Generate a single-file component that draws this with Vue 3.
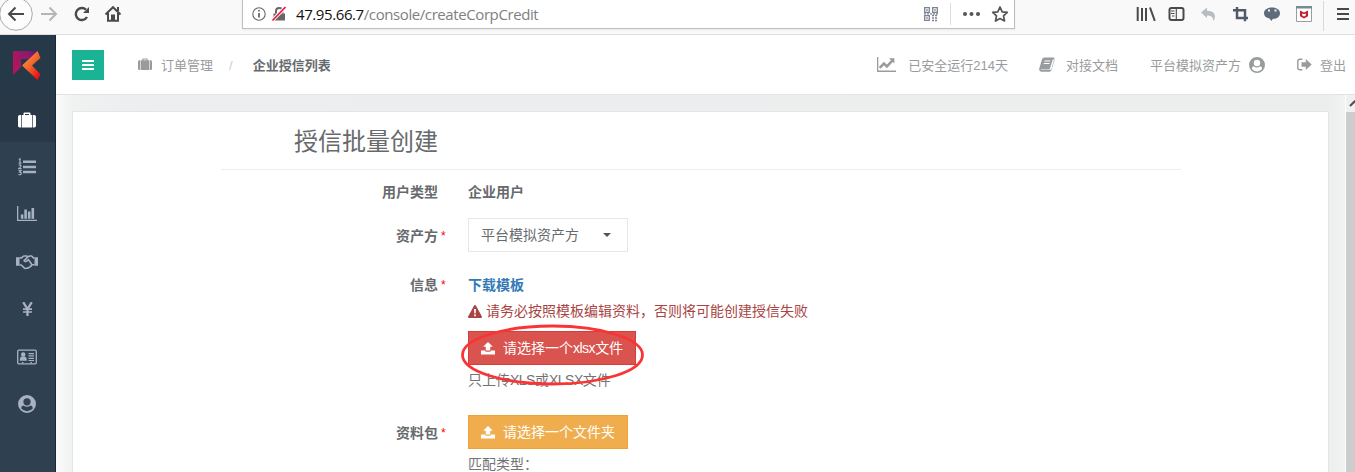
<script setup>
const menu = [
  { icon: 'suitcase', w: 18, h: 16, active: true },
  { icon: 'list', w: 18, h: 18 },
  { icon: 'bars', w: 20, h: 16 },
  { icon: 'handshake', w: 22, h: 16 },
  { icon: 'yen', w: 11, h: 14 },
  { icon: 'idcard', w: 20, h: 16 },
  { icon: 'user', w: 18, h: 18 },
]
</script>

<template>
  <svg class="sprite" aria-hidden="true">
    <symbol id="suitcase" viewBox="0 0 18 16">
      <path fill-rule="evenodd" d="M5.500 3V1.600Q5.500.5 6.600.5H11.400Q12.500.5 12.500 1.600V3H14.300V15.500H3.700V3zM7 3H11V2H7z" />
      <path d="M3 3V15.500H1.800Q0 15.500 0 13.700V4.800Q0 3 1.800 3z" />
      <path d="M15 3H16.200Q18 3 18 4.800V13.700Q18 15.500 16.200 15.500H15z" />
    </symbol>
    <symbol id="list" viewBox="0 0 18 18">
      <path d="M5 2.500h13v2.600H5zM5 7.700h13v2.600H5zM5 12.700h13v2.600H5z" />
      <path fill="none" stroke="currentColor" stroke-width="1.200" d="M.8 1.500 2 .8V5M.6 5.100h2.900M.7 7.400q1.600-1.200 2.200 0T.8 10.600h2.800M.6 12.600h2.500l-1.400 1.600q1.600 0 1.500 1.400-.3 1.700-2.800.9" />
    </symbol>
    <symbol id="bars" viewBox="0 0 20 16">
      <path d="M0 0h1.300v13.700H20V15H0zM3.800 8.500h2.600v4.200H3.800zM7.300 3.500h2.600v9.200H7.300zM10.900 5.500h2.600v7.200h-2.600zM14.500 2h2.600v10.700h-2.600z" />
    </symbol>
    <symbol id="handshake" viewBox="0 0 22 16">
      <path d="M0 3.200h3.500v8.600H0zM18.500 3.200H22v8.600h-3.500z" />
      <path fill="none" stroke="currentColor" stroke-width="1.600" stroke-linejoin="round" d="M3.500 3.900h2L7.700 2h3l1.200.8L14 2h1.600l1.900 1.900h1M3.500 11h1.800l3.200 3.100q1 .8 2 .1 1.200.4 1.900-.7 1.400.2 1.800-1.100 1.500-.1 1.300-1.600l3-.1M11.900 2.800 8 6.500q.9 1.700 2.600.5L12.400 5.600l3.300 4.700" />
    </symbol>
    <symbol id="yen" viewBox="0 0 11 14">
      <path fill="none" stroke="currentColor" stroke-width="2.300" d="M1.200.2 5.500 7 9.800.2M5.500 7v7" />
      <path d="M1 6.300h9v1.600H1zM1 9.200h9v1.600H1z" />
    </symbol>
    <symbol id="idcard" viewBox="0 0 20 16">
      <rect x=".7" y="1.200" width="18.600" height="13.600" rx="1.200" fill="none" stroke="currentColor" stroke-width="1.300" />
      <circle cx="6.200" cy="5.500" r="2.200" />
      <path d="M2.800 11.800Q2.800 7.500 5 7.500h2.400q2.400 0 2.400 4.300zM11.500 4H17v1.300h-5.500zM11.500 6.300H17v1.300h-5.500zM11.500 8.700H17V10h-5.500zM11.500 11H17v1h-5.500zM5 13h1.400v1.500H5zM13.500 13h1.400v1.500h-1.400z" />
    </symbol>
    <symbol id="user" viewBox="0 0 18 18">
      <path fill-rule="evenodd" d="M9 0a9 9 0 1 1 0 18A9 9 0 0 1 9 0zM9 3.200a3.600 3.600 0 1 0 0 7.200 3.600 3.600 0 0 0 0-7.200zM3.100 13.300Q3.500 10.400 5.400 10.400 9 13.200 12.600 10.400 14.500 10.400 14.900 13.300A7.400 7.400 0 0 1 3.100 13.300z" />
    </symbol>
    <symbol id="chart" viewBox="0 0 19 15">
      <path d="M0 0h1.300v13.500H19V15H0z" />
      <path fill="none" stroke="currentColor" stroke-width="2.600" d="m2.700 10.800 4.200-4.300 3 2.900 5.500-5.700" />
      <path d="M12 1.200H17.400v5.400z" />
    </symbol>
    <symbol id="book" viewBox="0 0 16 15">
      <path fill-rule="evenodd" d="M5.300.5h9.200q1.300.1.900 1.500l-3 10q-.4 1.100-1.500 1.100H2.500q-.9 0-.7-.5h8.800L13.900 2.300l1.700.7-3.200 10.300Q12 14.700 10.500 14.700H2.200Q-.2 14.200.2 11.800L3 2.200Q3.600.6 5.300.5zM5.600 3.400l-.3 1h5.900l.3-1zM4.900 5.900l-.3 1h5.900l.3-1z" />
    </symbol>
    <symbol id="signout" viewBox="0 0 15 13">
      <path fill="none" stroke="currentColor" stroke-width="1.400" d="M5.400 1.200H3Q.8 1.200.8 3.200v6.500q0 2 2.200 2h2.400" />
      <path d="M4.500 4.200H8.800V1l5.900 5.500-5.900 5.500v-3.200H4.500z" />
    </symbol>
    <symbol id="warning" viewBox="0 0 14 13">
      <path fill-rule="evenodd" d="M6.100.6Q7-.5 7.900.6l6 10.900Q14.300 13 13 13H1Q-.3 13 .1 11.500zM6 4l.3 4.500h1.400L8 4zM6.100 9.500v1.700h1.800V9.500z" />
    </symbol>
    <symbol id="upload" viewBox="0 0 14 13">
      <path d="M7 0 11.800 4.800H9.200V8.500H4.800V4.800H2.200z" />
      <path d="M0 8.500H4Q4.200 9.700 5.300 9.700H8.700Q9.800 9.700 10 8.500H14V12.500H0z" />
    </symbol>
  </svg>

  <div class="window">
    <div class="chrome">
      <svg class="nav" viewBox="0 0 130 34">
        <circle cx="16" cy="14" r="16.300" fill="#fdfdfd" stroke="#aaa" stroke-width="1" />
        <g fill="none" stroke="#4a4a4c" stroke-width="2">
          <path d="M24 14H9.500M15.500 7.500 9 14l6.500 6.500" />
          <path stroke="#b5b5b6" d="M41 14h14.500M49.500 7.500 56 14l-6.500 6.500" />
          <path d="M86 9.700A6 6 0 1 0 87 17" stroke-width="2.400" />
          <path d="m105.500 14.500 7.500-7.300 7.500 7.300M108 13v7.700h10V13" />
        </g>
        <path d="M89 7v6h-6zM111 14.500h4V21h-4zM117 7h2v4h-2z" fill="#4a4a4c" />
      </svg>
      <div class="address">
        <svg class="site" viewBox="0 0 38 20">
          <circle cx="7" cy="10" r="6.200" fill="none" stroke="#666" stroke-width="1.100" />
          <path d="M6.200 6h1.600v1.600H6.200zM6.200 9h1.600v4.500H6.200z" fill="#555" />
          <path d="M21.500 9.500h11.500v7H21.500z" fill="#666" />
          <path d="M24 9.500V7q0-3 3.200-3t3.200 3v2.500" fill="none" stroke="#666" stroke-width="2" />
          <path d="M33 3.500 20.800 16" stroke="#fff" stroke-width="3.500" />
          <path d="M33.500 3 20.500 16.500" stroke="#f0164a" stroke-width="1.800" />
        </svg>
        <span class="url"><b>47.95.66.7</b>/console/createCorpCredit</span>
        <svg class="actions" viewBox="0 0 96 28">
          <g fill="none" stroke="#7b8390" stroke-width="1.300">
            <path d="M5.700 7.700h4.600v4.600H5.700zM13.700 7.700h4.600v4.600h-4.600zM5.700 15.700h4.600v4.600H5.700z" />
            <path stroke-dasharray="2 1" d="M13 15.500h6M13 18h6M13 20.500h6M5 13.900h14" />
          </g>
          <path fill="#7b8390" d="M7.200 9.200h1.600v1.600H7.200zM15.200 9.200h1.600v1.600h-1.600zM7.200 17.200h1.600v1.600H7.200z" />
          <path d="M31.500 3v22" stroke="#dedede" />
          <g fill="#555"><circle cx="46" cy="14" r="2" /><circle cx="52.500" cy="14" r="2" /><circle cx="59" cy="14" r="2" /></g>
          <path d="m81 7 2.200 4.800 5.100.6-3.800 3.500 1 5.100-4.500-2.500-4.500 2.500 1-5.100-3.800-3.500 5.100-.6z" fill="none" stroke="#555" stroke-width="1.700" stroke-linejoin="round" />
        </svg>
      </div>
      <svg class="tools" viewBox="0 0 225 34">
        <path d="M7.700 7v14M12 8v13M16 8v13M20 7.500l4.800 13.300" fill="none" stroke="#4a4a4c" stroke-width="2" />
        <rect x="39.500" y="8" width="14" height="12" rx="2" fill="none" stroke="#4a4a4c" stroke-width="2" />
        <path d="M46.300 8v12M41 11h3.500M41 13.500h3.500M42 16h2.500" fill="none" stroke="#4a4a4c" stroke-width="1.100" />
        <path d="m71 12.500 6-5v3.200q8 0 8 6 0 2.300-1.800 4.300.4-5.500-6.200-5.500V18z" fill="#b9bdc1" />
        <path d="M103 10.300h12v11M107 7v11h11" fill="none" stroke="#4f5b68" stroke-width="2.500" />
        <path d="M142 7.500c5 0 8 2.500 8 5.700s-3 5.600-6.500 5.600q-1 0-2 2.200l-2-2.500c-3.500-.6-5.500-2.500-5.500-5.300 0-3.200 3-5.700 8-5.700z" fill="#5e6c7a" />
        <path d="M138 9.500h2v2h-2zM144.500 9.500h2v2h-2z" fill="#eef0f2" />
        <path d="M166.500 6.500h15v15h-15z" fill="#fff" stroke="#9c9c9c" />
        <path d="M166 6h16v2.500h-16z" fill="#6f8d93" />
        <path d="m170 10.500 4 2 4-2v5.700l-4 2.300-4-2.300z" fill="#c5202a" />
        <path d="m172.200 13.200 1.800 1 1.800-1v2.200l-1.800 1-1.800-1z" fill="#fff" />
        <path d="M193.500 1v30" stroke="#d9d9d9" />
        <path d="M207 9h12M207 14h12M207 19h12" stroke="#48484a" stroke-width="2" />
      </svg>
    </div>

    <div class="app">
      <aside class="sidebar">
        <div class="logo">
          <svg viewBox="0 0 28 29">
            <defs>
              <linearGradient id="lg1" x1="0" x2="1" y1=".5" y2="0">
                <stop offset="0" stop-color="#b5145c" /><stop offset=".6" stop-color="#8e1a6c" /><stop offset="1" stop-color="#5a1583" />
              </linearGradient>
              <linearGradient id="lg2" x1="0" x2=".8" y1="0" y2="1">
                <stop offset="0" stop-color="#f8a24b" /><stop offset=".5" stop-color="#f36b2d" /><stop offset="1" stop-color="#e80c13" />
              </linearGradient>
            </defs>
            <path d="M0 0h25L16 8H8v8L0 24z" fill="url(#lg1)" />
            <path d="M24.500 0 27.500 7 19 14.500l8.500 9L24.500 29 9 14.500z" fill="url(#lg2)" />
          </svg>
        </div>
        <a v-for="m in menu" :key="m.icon" class="item" :class="{ active: m.active }">
          <svg :width="m.w" :height="m.h"><use :href="'#' + m.icon" /></svg>
        </a>
      </aside>

      <div class="main">
        <header class="topbar">
          <button class="toggle"><i></i><i></i><i></i></button>
          <svg class="crumb-icon" width="14" height="12.500"><use href="#suitcase" /></svg>
          <span class="crumb">订单管理</span>
          <span class="slash">/</span>
          <strong>企业授信列表</strong>
          <div class="links">
            <svg width="19" height="15"><use href="#chart" /></svg><span class="l1">已安全运行214天</span>
            <svg width="16" height="15"><use href="#book" /></svg><span class="l2">对接文档</span>
            <span class="l3">平台模拟资产方</span><svg width="16" height="16"><use href="#user" /></svg>
            <svg class="out" width="15" height="13"><use href="#signout" /></svg><span>登出</span>
          </div>
        </header>
        <div class="content">
          <section class="card">
            <div class="form">
              <h1>授信批量创建</h1>
              <div class="row type">
                <label>用户类型</label><em></em>
                <b>企业用户</b>
              </div>
              <div class="row owner">
                <label>资产方</label><em>*</em>
                <div class="select">平台模拟资产方<i></i></div>
              </div>
              <div class="row info">
                <label>信息</label><em>*</em>
                <div>
                  <a class="download">下载模板</a>
                  <p class="warn"><svg width="14" height="13"><use href="#warning" /></svg>请务必按照模板编辑资料，否则将可能创建授信失败</p>
                  <button class="btn red"><svg width="14" height="13"><use href="#upload" /></svg><span>请选择一个<span class="latin">xlsx</span>文件</span></button>
                  <p class="hint">只上传<span class="latin">XLS</span>或<span class="latin">XLSX</span>文件</p>
                  <svg class="ring" viewBox="0 0 184 62"><ellipse cx="92.500" cy="31" rx="90" ry="29" fill="none" stroke="#fa3434" stroke-width="2.800" /></svg>
                </div>
              </div>
              <div class="row pack">
                <label>资料包</label><em>*</em>
                <div>
                  <button class="btn orange"><svg width="14" height="13"><use href="#upload" /></svg>请选择一个文件夹</button>
                  <p class="hint">匹配类型：</p>
                </div>
              </div>
            </div>
          </section>
          <div class="scrollbar"><svg viewBox="0 0 10 17"><path d="m4 11 4.500-4.500L13 11" fill="none" stroke="#505050" stroke-width="2" /></svg><i></i></div>
        </div>
      </div>
    </div>
  </div>
</template>

<style>
body { overflow: hidden; }
</style>

<style scoped>
* { box-sizing: border-box; }
.sprite { display: none; }
svg { display: block; flex: none; fill: currentColor; }
.window { width: 1355px; height: 472px; overflow: hidden; display: flex; flex-direction: column; font: 14px/20px "Liberation Sans", "Noto Sans CJK SC", sans-serif; color: #676a6c; background: #fff; }
.chrome { flex: none; height: 35px; display: flex; background: #f9f9fa; border-bottom: 1px solid #dedede; }
.nav { width: 130px; height: 34px; }
.address { width: 773px; height: 29px; margin-left: 112px; display: flex; align-items: center; background: #fff; border: solid #bebebe; border-width: 0 1px 1px; box-shadow: 0 1px 2px #0001; }
.site { width: 38px; height: 20px; margin-left: 9px; }
.url { margin-left: 6px; flex: 1; font-family: "Open Sans", sans-serif; font-size: 15px; color: #808080; white-space: nowrap; letter-spacing: -.41px; }
.url b { font-weight: 400; color: #111; }
.actions { width: 96px; height: 28px; margin-right: -1px; }
.tools { width: 225px; height: 34px; margin-left: 115px; }
.app { flex: 1; display: flex; min-height: 0; }
.sidebar { width: 56px; flex: none; background: #2f4050; border-right: 1px solid #1c2833; color: #a7b1c2; }
.logo { height: 60px; padding: 16px 0 0 13px; background: #263949; }
.logo svg { width: 28px; height: 29px; }
.item { height: 47.400px; display: flex; align-items: center; justify-content: center; padding: 2px 1px 0 0; }
.item.active { background: #293846; color: #fff; }
.main { flex: 1; display: flex; flex-direction: column; min-width: 0; }
.topbar { flex: none; height: 60px; padding-left: 16px; display: flex; align-items: center; background: #fff; border-bottom: 1px solid #e2e3e4; font-size: 13px; color: #999c9e; white-space: nowrap; }
.topbar span, .topbar strong { padding-top: 2px; }
.toggle { width: 32px; height: 30px; border: 0; padding: 0 10px; margin: 0; background: #1ab394; display: flex; flex-direction: column; justify-content: center; gap: 2px; }
.toggle i { height: 2px; background: #fff; }
.crumb-icon { margin-left: 34px; }
.crumb { margin-left: 9px; }
.slash { margin: 0 20px 0 16px; color: #ccc; }
.topbar strong { color: #676a6c; }
.links { flex: 1; display: flex; align-items: center; justify-content: flex-end; padding-right: 9px; }
.l1 { margin: 0 31px 0 12px; }
.l2 { margin: 0 32px 0 11px; }
.l3 { margin-right: 8px; }
.out { margin: 0 8px 0 32px; }
.content { flex: 1; min-height: 0; display: flex; padding: 16px 0 0 16px; background: linear-gradient(90deg, #fbfbfb, #f0f2f2 16px, #eceeef 80px, #eceeee 1270px, #f3f4f4); }
.card { width: 1257px; height: 400px; border: 1px solid #e3e6e7; background: #fff; }
.scrollbar { width: 10px; height: 377px; margin: -16px 0 0 auto; background: #f0f0f0; border-left: 1px solid #fff; }
.scrollbar svg { width: 10px; height: 17px; }
.scrollbar i { display: block; height: 360px; background: #cdcdcd; }
.form { width: 960px; margin-left: 148px; }
h1 { height: 58px; margin: 0; padding-left: 73px; border-bottom: 1px solid #eee; font-size: 24px; font-weight: 400; line-height: 59px; }
.row { display: grid; grid-template-columns: 217px 30px 1fr; }
label { text-align: right; font-weight: 700; }
em { font-style: normal; font-size: 12px; color: #f00; padding-left: 3px; }
.type { padding-top: 12px; height: 48px; }
.owner { height: 54px; }
.owner label, .owner em { padding-top: 8px; }
.select { width: 160px; height: 34px; padding-left: 12px; display: flex; align-items: center; gap: 24px; border: 1px solid #e5e6e7; }
.select i { border: 4px solid transparent; border-top-color: #555; border-bottom: 0; }
.info { height: 143px; padding-top: 3px; }
.info > div { position: relative; }
.download { display: block; font-weight: 700; color: #337ab7; }
p { margin: 0; }
.warn { display: flex; align-items: center; gap: 4px; margin-top: 6px; color: #a94442; }
.btn { height: 34px; padding: 0 12px; margin: 0; display: flex; align-items: center; gap: 8px; font: inherit; color: #fff; border: 1px solid; white-space: nowrap; }
.latin { letter-spacing: -.5px; }
.red { width: 168px; margin-top: 10px; background: #d9534f; border-color: #d43f3a; }
.orange { width: 160px; background: #f0ad4e; border-color: #eea236; }
.hint { margin-top: 5px; color: #737373; }
.ring { position: absolute; left: -8px; top: 49px; width: 184px; height: 62px; }
.pack label, .pack em { padding-top: 8px; }
</style>
